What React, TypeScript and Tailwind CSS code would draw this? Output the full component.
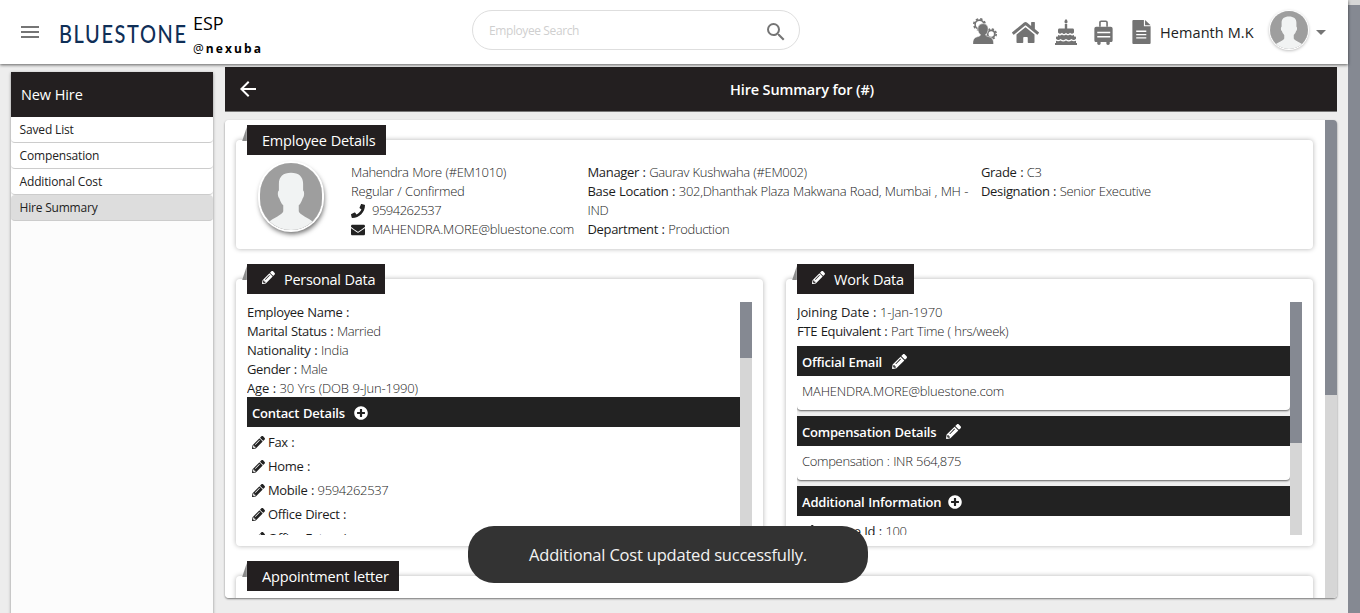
import type { ReactNode } from "react";
import { FaPhone, FaEnvelope, FaPlusCircle, FaHome } from "react-icons/fa";
import { MdMenu, MdSearch, MdArrowBack, MdArrowDropDown } from "react-icons/md";

function Pencil({ className }: { className: string }) {
  return (
    <svg viewBox="0 0 512 512" className={className} fill="currentColor">
      <path d="M497.900 142.100l-46.100 46.100c-4.700 4.700-12.300 4.700-17 0l-111-111c-4.700-4.700-4.700-12.300 0-17l46.100-46.100c18.700-18.700 49.100-18.700 67.900 0l60.100 60.100c18.800 18.700 18.800 49.100 0 67.900zM284.200 99.800L21.600 362.400.400 483.900c-2.900 16.400 11.400 30.600 27.800 27.800l121.500-21.300 262.600-262.600c4.700-4.700 4.700-12.300 0-17l-111-111c-4.800-4.700-12.400-4.700-17.100 0zM124.100 339.900c-5.500-5.500-5.500-14.300 0-19.800l154-154c5.500-5.500 14.300-5.500 19.800 0s5.500 14.300 0 19.800l-154 154c-5.500 5.500-14.300 5.500-19.800 0zM88 424h48v36.300l-64.500 11.300-31.100-31.100L51.700 376H88v48z" />
    </svg>
  );
}

function Avatar({ className }: { className: string }) {
  return (
    <svg viewBox="0 0 64 68" preserveAspectRatio="none" className={className}>
      <rect width="64" height="68" fill="#9e9e9e" />
      <path
        d="M32 10c8 0 12.500 4 12.500 11v7c1.500.500 1.500 6-.500 8-1 3-2 5-4 7v6c1 4 11 7 15 11v8H9v-8c4-4 14-7 15-11v-6c-2-2-3-4-4-7-2-2-2-7.500-.500-8v-7c0-7 4.500-11 12.500-11z"
        fill="#f1f3f3"
      />
    </svg>
  );
}

function TeamIcon() {
  return (
    <svg viewBox="0 0 24 26" className="h-[26px] w-[24px]" fill="#737373">
      <circle cx="6.500" cy="6.500" r="4.400" fill="none" stroke="#737373" strokeWidth="1.600" />
      <circle cx="6.500" cy="6.500" r="5.700" fill="none" stroke="#737373" strokeWidth="1.600" strokeDasharray="2.400 2.080" />
      <circle cx="18.200" cy="16" r="3.600" fill="none" stroke="#737373" strokeWidth="1.800" />
      <circle cx="18.200" cy="16" r="5" fill="none" stroke="#737373" strokeWidth="1.600" strokeDasharray="2.200 1.730" />
      <path
        d="M10 5.600c3.200 0 5.200 2.200 5.200 5.200 0 2.700-1.200 5-2.700 6.200 1 1.200 2.500 1.400 4.300 2 2.600.900 3.900 2.800 3.900 7.500H-.300c0-4.700 1.300-6.600 3.900-7.500 1.800-.600 3-.800 4-2-1.600-1.200-2.800-3.500-2.800-6.200 0-3 2-5.200 5.200-5.200z"
        stroke="#fff"
        strokeWidth=".6"
      />
    </svg>
  );
}

function CakeIcon() {
  return (
    <svg viewBox="0 0 22 26" className="h-[26px] w-[22px]" fill="#737373">
      <path d="M11 0c1.500 1.600 1.900 2.600 1.300 3.700-.700.900-1.900.900-2.600 0C9.100 2.600 9.600 1.500 11 0z" />
      <path d="M9.800 5h2.400v5H9.800z" />
      <path d="M4.500 9.500h13c1 0 1.500.600 1.500 1.500v2.500c-1.200 1.700-2.700 1.700-4 .300-1.300 1.600-2.700 1.600-4 0-1.300 1.600-2.700 1.600-4 0-1.300 1.400-2.800 1.400-4-.300V11c0-.900.500-1.500 1.500-1.500z" />
      <path d="M3 16c1.500.700 3 .500 4-.600 1.300 1.200 2.700 1.200 4 0 1.300 1.200 2.700 1.200 4 0 1 1.100 2.500 1.300 4 .600V18H3z" />
      <path d="M1.700 17.500h18.600c.500 0 .700.400.700 1v1.300c-1.500 1.600-3 1.600-4.500.200-1.800 1.500-3.700 1.500-5.500 0-1.800 1.500-3.700 1.500-5.500 0-1.500 1.400-3 1.400-4.500-.200v-1.300c0-.600.200-1 .700-1z" />
      <path d="M1 21.800c1.600.700 3.300.500 4.500-.300 1.800 1.200 3.700 1.200 5.500 0 1.800 1.200 3.700 1.200 5.500 0 1.200.800 2.900 1 4.500.300V24h1v2H0v-2h1z" />
    </svg>
  );
}

function LuggageIcon() {
  return (
    <svg viewBox="0 0 19 26" className="h-[25px] w-[19px]">
      <path d="M5.800 7V2.500c0-.800.400-1.200 1.200-1.200h5c.800 0 1.200.400 1.200 1.200V7" fill="none" stroke="#737373" strokeWidth="1.700" />
      <path
        d="M2 7h15c1.200 0 2 .800 2 2v12c0 1.200-.800 2-2 2h-1v1.500c0 .900-.600 1.500-1.800 1.500s-1.700-.600-1.700-1.500V23h-6v1.500c0 .900-.600 1.500-1.700 1.500S3 25.400 3 24.500V23H2c-1.200 0-2-.800-2-2V9c0-1.200.800-2 2-2z"
        fill="#737373"
      />
      <path d="M3 13h13.500M3 17.500h13.500" stroke="#fff" strokeWidth="1.600" />
    </svg>
  );
}

function DocumentIcon() {
  return (
    <svg viewBox="0 0 19 25" className="h-[24px] w-[19px]">
      <path d="M1 0h11v6.500h7V24c0 .600-.400 1-1 1H1c-.600 0-1-.400-1-1V1c0-.600.400-1 1-1zM13.200 0L19 5.500h-5.800z" fill="#737373" />
      <path d="M4 11.700h10.500M4 15.200h10.500M4 18.700h10.500" stroke="#fff" strokeWidth="1.400" />
    </svg>
  );
}

function Header() {
  return (
    <header className="relative z-10 flex h-16 w-[1348px] shrink-0 items-start bg-white shadow-[0_1px_3px_rgba(0,0,0,0.6)]">
      <MdMenu className="ml-[18px] mt-5 size-6 text-[#757575]" />
      <svg viewBox="0 0 126 15" preserveAspectRatio="none" className="ml-[18px] mt-[26px] h-[18px] w-[126px] overflow-visible">
        <text
          x="-1"
          y="14.200"
          textLength="127"
          lengthAdjust="spacing"
          className="fill-[#0f2f57] font-[Lato] text-[20px] font-medium"
        >
          BLUESTONE
        </text>
      </svg>
      <div className="ml-[7px] mt-[12px] w-[100px] text-black">
        <div className="text-[18px] leading-[22px] tracking-[-0.100px]">ESP</div>
        <div className="mt-[5px] text-[12px] font-bold leading-[20px] tracking-[2.100px]">
          <span className="font-medium">@</span>nexuba
        </div>
      </div>
      <div className="ml-[179px] mt-[10px] flex h-10 w-[328px] items-center justify-between rounded-full border border-[#dedede] pl-4 pr-[11px]">
        <span className="mt-[2px] text-[12px] tracking-[-0.400px] text-[#cfcfcf]">Employee Search</span>
        <MdSearch className="mt-[3px] size-6 text-[#757575]" />
      </div>
      <div className="ml-[173px] mt-[18px] flex items-start">
        <TeamIcon />
        <FaHome className="ml-[15px] mt-px size-[27px] text-[#737373]" />
        <div className="ml-[16px] mt-px"><CakeIcon /></div>
        <div className="ml-[17px] mt-[2px]"><LuggageIcon /></div>
        <div className="ml-[19px] mt-[2px]"><DocumentIcon /></div>
      </div>
      <span className="ml-[9px] mt-[22px] w-[94px] whitespace-nowrap text-[14.500px] leading-[22px] tracking-[0.080px] text-[#212121]">Hemanth M.K</span>
      <Avatar className="ml-4 mt-[11px] h-[38px] w-[38px] rounded-full shadow-[0_0_0_1px_#fff,0_1px_3px_1px_rgba(0,0,0,0.25)]" />
      <MdArrowDropDown className="ml-px mt-5 size-6 text-[#757575]" />
    </header>
  );
}

function Sidebar() {
  return (
    <aside className="ml-[11px] mt-2 h-[600px] w-[202px] shrink-0 bg-[#fcfcfc] shadow-[0_1px_3px_rgba(0,0,0,0.4)]">
      <div className="flex h-[45px] items-center bg-[#231f20] pl-[10px] text-[14.500px] tracking-[-0.100px] text-white">New Hire</div>
      {["Saved List", "Compensation", "Additional Cost"].map((t) => (
        <div key={t} className="flex h-[26px] items-center rounded-sm border-b border-[#ccc] bg-white pl-[8.500px] pt-px text-[12px] tracking-[-0.150px] text-[#222]">
          {t}
        </div>
      ))}
      <div className="flex h-[26px] items-center rounded-sm border-b border-[#ccc] bg-[#ddd] pl-[8.500px] pt-px text-[12px] tracking-[-0.200px] text-[#222]">Hire Summary</div>
    </aside>
  );
}

function Tab({ title, pencil, className }: { title: string; pencil?: boolean; className: string }) {
  return (
    <div className={"absolute -top-[15px] left-[11px] flex h-[30px] items-center whitespace-nowrap bg-[#231f20] pl-[15px] pt-[2px] text-[14.500px] font-normal text-white " + className}>
      <svg viewBox="0 0 5 15" className="absolute -left-[5px] top-[2px] h-[14px] w-[5px]">
        <path d="M5 0v15H0z" fill="#8a8a8a" />
      </svg>
      {pencil && <Pencil className="-mt-[5px] mr-[9px] size-[13px]" />}
      {title}
    </div>
  );
}

function Line({ label, value }: { label?: string; value?: string }) {
  return (
    <div className="h-[19px] leading-[19px]">
      {label && <span className="font-normal">{label} : </span>}
      {value}
    </div>
  );
}

function Bar({ title, children }: { title: string; children: ReactNode }) {
  return (
    <div className="flex h-[30px] items-center bg-[#222] pl-[5px] pt-[3px] text-[13px] font-semibold tracking-[-0.200px] text-white">
      {title}
      {children}
    </div>
  );
}

function Contact({ label, value }: { label: string; value?: string }) {
  return (
    <div className="flex h-6 items-center whitespace-pre pl-[5px]">
      <Pencil className="-mt-[2px] mr-[3px] size-[13px] text-[#222]" />
      <span className="font-normal">{label} : </span>
      {value}
    </div>
  );
}

const card = "relative rounded bg-white shadow-[0_0_5px_rgba(0,0,0,0.3)]";

function EmployeeCard() {
  return (
    <section className={card + " flex h-[109px] w-[1077px] pt-[23px]"}>
      <Tab title="Employee Details" className="w-[139px] tracking-[-0.200px]" />
      <Avatar className="ml-[24px] h-[67px] w-[62px] rounded-full shadow-[0_0_0_2px_#fff,1px_3px_5px_1px_rgba(0,0,0,0.6)]" />
      <div className="ml-[29px] w-[236.500px] whitespace-nowrap">
        <Line value="Mahendra More (#EM1010)" />
        <div className="tracking-[-0.230px]"><Line value="Regular / Confirmed" /></div>
        <div className="flex h-[19px] items-center tracking-[-0.500px]"><FaPhone className="mr-[7px] size-[14px] text-[#222]" />9594262537</div>
        <div className="flex h-[19px] items-center tracking-[-0.180px]"><FaEnvelope className="mr-[7px] size-[14px] text-[#222]" />MAHENDRA.MORE@bluestone.com</div>
      </div>
      <div className="w-[393.500px] whitespace-nowrap">
        <Line label="Manager" value="Gaurav Kushwaha (#EM002)" />
        <div className="tracking-[-0.290px]"><Line label="Base Location" value="302,Dhanthak Plaza Makwana Road, Mumbai , MH -" /></div>
        <Line value="IND" />
        <Line label="Department" value="Production" />
      </div>
      <div className="whitespace-nowrap">
        <Line label="Grade" value="C3" />
        <Line label="Designation" value="Senior Executive" />
      </div>
    </section>
  );
}

function PersonalCard() {
  return (
    <section className={card + " h-[267px] w-[527px] pl-[11px] pt-[23px]"}>
      <Tab title="Personal Data" pencil className="w-[138px] tracking-[-0.300px]" />
      <div className="flex h-[233px] w-[505px] overflow-hidden">
        <div className="w-[493px] pt-px">
          <Line label="Employee Name" />
          <Line label="Marital Status" value="Married" />
          <div className="tracking-[-0.200px]"><Line label="Nationality" value="India" /></div>
          <Line label="Gender" value="Male" />
          <div className="-mb-px tracking-[-0.200px]"><Line label="Age" value="30 Yrs (DOB 9-Jun-1990)" /></div>
          <Bar title="Contact Details"><FaPlusCircle className="-mt-[2px] ml-[9px] size-[14px]" /></Bar>
          <div className="h-[4px]" />
          <Contact label="Fax" />
          <Contact label="Home" />
          <Contact label="Mobile" value="9594262537" />
          <Contact label="Office Direct" />
          <Contact label="Office Extension" />
        </div>
        <div className="w-3 bg-[#d6d6d6]"><div className="h-14 bg-[#858992]" /></div>
      </div>
    </section>
  );
}

function WorkCard() {
  return (
    <section className={card + " h-[267px] w-[527px] pl-[11px] pt-[23px]"}>
      <Tab title="Work Data" pencil className="w-[117px] tracking-[-0.200px]" />
      <div className="flex h-[233px] w-[505px] overflow-hidden">
        <div className="w-[493px] pt-px">
          <div className="tracking-[-0.100px]"><Line label="Joining Date" value="1-Jan-1970" /></div>
          <Line label="FTE Equivalent" value="Part Time ( hrs/week)" />
          <div className="h-[5px]" />
          <Bar title="Official Email"><Pencil className="-mt-[3px] ml-[10px] size-[15px]" /></Bar>
          <div className="bg-[#efefef] pb-[6px]">
            <div className="h-[34px] rounded-b-sm bg-white pl-[5px] leading-[31px] tracking-[-0.180px] shadow-[0_1px_2px_rgba(0,0,0,0.6)]">MAHENDRA.MORE@bluestone.com</div>
          </div>
          <div className="relative"><Bar title="Compensation Details"><Pencil className="-mt-[3px] ml-[10px] size-[15px]" /></Bar></div>
          <div className="bg-[#efefef] pb-[6px]">
            <div className="h-[34px] rounded-b-sm bg-white pl-[5px] leading-[31px] shadow-[0_1px_2px_rgba(0,0,0,0.6)]">Compensation : INR 564,875</div>
          </div>
          <div className="relative"><Bar title="Additional Information"><FaPlusCircle className="-mt-[2px] ml-[7px] size-[14px]" /></Bar></div>
          <div className="h-[4px]" />
          <Contact label="License Id" value="100" />
        </div>
        <div className="w-3 bg-[#d6d6d6]"><div className="h-[141px] bg-[#858992]" /></div>
      </div>
    </section>
  );
}

export default function App() {
  return (
    <div className="relative flex h-[613px] w-[1360px] overflow-hidden bg-[#ededed] font-['Open_Sans','Noto_Sans',sans-serif]">
      <div className="flex w-[1348px] flex-col">
        <Header />
        <div className="flex h-[549px]">
          <Sidebar />
          <main className="ml-3 mt-[3px] w-[1112px]">
            <div className="flex h-[45px] items-center border-b border-[#777] bg-[#231f20] text-white">
              <MdArrowBack className="ml-[11px] size-6" />
              <h1 className="ml-[470px] mt-[2px] whitespace-nowrap text-[14.500px] font-semibold tracking-[-0.150px]">Hire Summary for (#)</h1>
            </div>
            <div className="mt-2 h-[478px] rounded-sm shadow-[0_1px_2px_rgba(0,0,0,0.5)]">
              <div className="flex h-[478px] overflow-hidden rounded-sm bg-white">
                <div className="w-[1100px] pl-[11px] pt-5 text-[13px] font-[350] tracking-[-0.330px] text-[#1c1c1c] [word-spacing:0.500px]">
                  <EmployeeCard />
                  <div className="mt-[30px] flex gap-[23px]">
                    <PersonalCard />
                    <WorkCard />
                  </div>
                  <section className={card + " mt-[30px] h-[100px] w-[1077px]"}>
                    <Tab title="Appointment letter" className="w-[152px] tracking-[-0.150px]" />
                  </section>
                </div>
                <div className="w-3 bg-[#d6d6d6]"><div className="h-[275px] bg-[#858992]" /></div>
              </div>
            </div>
          </main>
        </div>
      </div>
      <div className="w-3 bg-[#d6d6d6] pt-[5px]"><div className="h-[608px] bg-[#858992]" /></div>
      <div className="absolute left-[468px] top-[526px] z-20 flex h-[57px] w-[400px] items-center justify-center rounded-[26px] bg-[#333] pt-[2px] text-[16.500px] tracking-[-0.200px] text-[#f3f3f3]">
        Additional Cost updated successfully.
      </div>
    </div>
  );
}
